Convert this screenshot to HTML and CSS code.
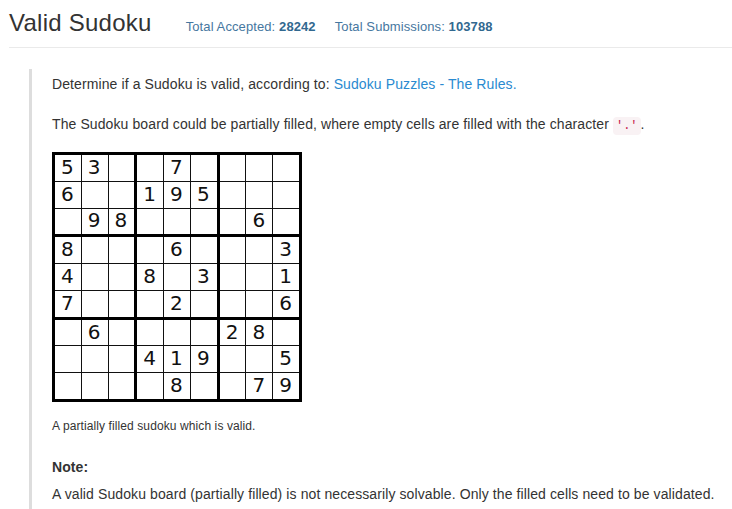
FILE: index.html
```html
<!DOCTYPE html>
<html lang="en">
<head>
<meta charset="utf-8">
<title>Valid Sudoku</title>
<link rel="stylesheet" href="styles.css">
</head>
<body>
<div class="page">
  <header class="head">
    <h1 class="title">Valid Sudoku</h1>
    <span class="stat stat-first">Total Accepted: <b>28242</b></span>
    <span class="stat">Total Submissions: <b>103788</b></span>
  </header>
  <blockquote class="desc">
    <p class="para">Determine if a Sudoku is valid, according to: <a class="link" href="#">Sudoku Puzzles - The Rules.</a></p>
    <p class="para para-board">The Sudoku board could be partially filled, where empty cells are filled with the character <code class="code">'.'</code>.</p>
    <div class="board">
      <div class="block"><span>5</span><span>3</span><span></span><span>6</span><span></span><span></span><span></span><span>9</span><span>8</span></div>
      <div class="block"><span></span><span>7</span><span></span><span>1</span><span>9</span><span>5</span><span></span><span></span><span></span></div>
      <div class="block"><span></span><span></span><span></span><span></span><span></span><span></span><span></span><span>6</span><span></span></div>
      <div class="block"><span>8</span><span></span><span></span><span>4</span><span></span><span></span><span>7</span><span></span><span></span></div>
      <div class="block"><span></span><span>6</span><span></span><span>8</span><span></span><span>3</span><span></span><span>2</span><span></span></div>
      <div class="block"><span></span><span></span><span>3</span><span></span><span></span><span>1</span><span></span><span></span><span>6</span></div>
      <div class="block"><span></span><span>6</span><span></span><span></span><span></span><span></span><span></span><span></span><span></span></div>
      <div class="block"><span></span><span></span><span></span><span>4</span><span>1</span><span>9</span><span></span><span>8</span><span></span></div>
      <div class="block"><span>2</span><span>8</span><span></span><span></span><span></span><span>5</span><span></span><span>7</span><span>9</span></div>
    </div>
    <p class="caption">A partially filled sudoku which is valid.</p>
    <p class="para note"><b>Note:</b></p>
    <p class="para para-last">A valid Sudoku board (partially filled) is not necessarily solvable. Only the filled cells need to be validated.</p>
  </blockquote>
</div>
</body>
</html>
```

FILE: styles.css
```css
html, body {
  margin: 0;
  padding: 0;
  background: #fff;
}

body {
  font-family: "Liberation Sans", Arial, sans-serif;
  color: #333;
  font-size: 14px;
  overflow: hidden;
}

.page {
  padding-left: 9px;
}

.head {
  display: flex;
  align-items: baseline;
  padding: 10px 0 11px;
  border-bottom: 1px solid #eaeaea;
}

.title {
  margin: 0;
  font-size: 24px;
  line-height: 26px;
  font-weight: normal;
  letter-spacing: 0.25px;
  color: #333;
}

.stat {
  font-size: 13px;
  letter-spacing: 0.1px;
  color: #4677a0;
  margin-left: 19px;
}

.stat-first {
  margin-left: 34px;
}

.stat b {
  color: #31688f;
}

.desc {
  margin: 21px 0 0 20px;
  padding: 5px 0 5px 20px;
  border-left: 3px solid #dddddd;
}

.para {
  margin: 0 0 20px;
  font-size: 14px;
  line-height: 20px;
  letter-spacing: 0.1px;
}

.para-board {
  margin-bottom: 16px;
}

.para-last {
  margin-bottom: 0;
}

.link {
  color: #2a8ad0;
  text-decoration: none;
}

.code {
  font-family: "Liberation Mono", "Courier New", monospace;
  font-size: 12px;
  letter-spacing: 0;
  color: #c7254e;
  background: #f9f2f4;
  padding: 2px 3px;
  border-radius: 4px;
}

.board {
  width: 250px;
  height: 250px;
  box-sizing: border-box;
  padding: 3px;
  background: #000;
  display: grid;
  grid-template-columns: repeat(3, 1fr);
  grid-template-rows: repeat(3, 1fr);
  gap: 3px;
}

.block {
  display: grid;
  grid-template-columns: repeat(3, 1fr);
  grid-template-rows: repeat(3, 1fr);
  gap: 1px;
  background: #111;
}

.block span {
  background: #fff;
  display: flex;
  align-items: center;
  justify-content: center;
  font-family: "DejaVu Sans", sans-serif;
  font-size: 20px;
  line-height: 1;
  color: #111;
  padding: 0 1px 2px 0;
}

.caption {
  margin: 16px 0 0;
  font-size: 12px;
  line-height: 17px;
  letter-spacing: 0.1px;
}

.note {
  margin: 22px 0 7px;
}
```
